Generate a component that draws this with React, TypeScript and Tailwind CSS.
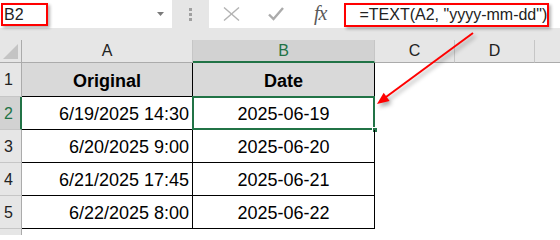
import React from 'react';

const rows = [
    { n: 2, a: '6/19/2025 14:30', b: '2025-06-19' },
    { n: 3, a: '6/20/2025 9:00', b: '2025-06-20' },
    { n: 4, a: '6/21/2025 17:45', b: '2025-06-21' },
    { n: 5, a: '6/22/2025 8:00', b: '2025-06-22' },
];

const Arrow = () => (
    <svg
        className="absolute inset-0 pointer-events-none drop-shadow-[2px_3px_2px_rgba(0,0,0,0.35)]"
        width="560"
        height="235"
        viewBox="0 0 560 235"
    >
        <line x1="473" y1="33" x2="386" y2="97" stroke="#ff0000" strokeWidth="2" />
        <polygon points="377,104 389.6,100.9 383.7,92.8" fill="#ff0000" />
    </svg>
);

export default function App() {
    return (
        <div className="relative w-[560px] h-[235px] overflow-hidden bg-white font-['Liberation_Sans',Arial,sans-serif] text-black">
            {/* Name box + formula bar */}
            <div className="flex h-[28px]">
                <div className="w-[172px] bg-white flex items-start pt-[3px] pl-[1px] relative">
                    <div className="w-[47px] h-[23px] border-2 border-[#ff0000] shadow-[2px_2px_3px_rgba(0,0,0,0.3)] flex items-center pl-[1px] text-[16px] text-[#222]">
                        B2
                    </div>
                    <svg className="absolute left-[157px] top-[12px]" width="7" height="4" viewBox="0 0 7 4">
                        <polygon points="0,0 7,0 3.5,4" fill="#7a7a7a" />
                    </svg>
                </div>
                <div className="w-[37px] bg-[#e6e6e6] flex flex-col items-center pt-[8px] gap-[2px] pr-[1px]">
                    <div className="w-[3px] h-[3px] bg-[#a0a0a0]" />
                    <div className="w-[3px] h-[3px] bg-[#a0a0a0]" />
                    <div className="w-[3px] h-[3px] bg-[#a0a0a0]" />
                </div>
                <div className="flex-1 bg-white flex items-start">
                    <svg className="ml-[14px] mt-[7px]" width="17" height="14" viewBox="0 0 17 14">
                        <line x1="1" y1="0.5" x2="16" y2="13.5" stroke="#b3b3b3" strokeWidth="1.4" />
                        <line x1="16" y1="0.5" x2="1" y2="13.5" stroke="#b3b3b3" strokeWidth="1.4" />
                    </svg>
                    <svg className="ml-[28px] mt-[7px]" width="16" height="14" viewBox="0 0 16 14">
                        <polyline points="1,7.5 5.5,12 15,1" fill="none" stroke="#ababab" strokeWidth="2.4" />
                    </svg>
                    <span className="ml-[30px] mt-[0px] font-['Liberation_Serif',serif] italic text-[20px] leading-[26px] text-[#5a5a5a] tracking-[-1px]">
                        fx
                    </span>
                    <div className="ml-[18px] mt-[3px] w-[205px] h-[24px] border-2 border-[#ff0000] shadow-[2px_2px_3px_rgba(0,0,0,0.3)] flex items-center pl-[13px] text-[16px] text-[#222] whitespace-nowrap">
                        =TEXT(A2, "yyyy-mm-dd")
                    </div>
                </div>
            </div>

            <div className="h-[12px] bg-[#e6e6e6]" />

            {/* Sheet grid */}
            <div className="grid grid-cols-[22px_171px_182px_80px_80px_1fr] grid-rows-[23px_34px_33px_33px_33px_33px_1fr] h-[195px]">
                {/* Column headers */}
                <div className="bg-[#e6e6e6] border-r border-b border-[#ababab] flex items-end justify-end pr-[3px] pb-[3px]">
                    <svg width="15" height="15" viewBox="0 0 15 15">
                        <polygon points="15,0 15,15 0,15" fill="#c4c4c4" />
                    </svg>
                </div>
                <div className="bg-[#e6e6e6] border-r border-r-[#c6c6c6] border-b border-b-[#ababab] flex items-center justify-center text-[16px] text-[#222]">
                    A
                </div>
                <div className="bg-[#d2d2d2] border-r border-r-[#c6c6c6] border-b-2 border-b-[#217346] flex items-center justify-center text-[16px] text-[#217346] pt-[1px]">
                    B
                </div>
                <div className="bg-[#e6e6e6] border-r border-r-[#c6c6c6] border-b border-b-[#ababab] flex items-center justify-center text-[16px] text-[#222]">
                    C
                </div>
                <div className="bg-[#e6e6e6] border-r border-r-[#c6c6c6] border-b border-b-[#ababab] flex items-center justify-center text-[16px] text-[#222]">
                    D
                </div>
                <div className="bg-[#e6e6e6] border-b border-b-[#ababab]" />

                {/* Row 1 */}
                <div className="bg-[#e6e6e6] border-r border-r-[#ababab] border-b border-b-[#c6c6c6] flex items-end pl-[4px] pb-[4px] text-[16px] text-[#222]">
                    1
                </div>
                <div className="bg-[#d9d9d9] border-r border-b border-black flex items-center justify-center pt-[3px] text-[18px] font-bold">
                    Original
                </div>
                <div className="bg-[#d9d9d9] border-r border-black flex items-center justify-center pt-[3px] text-[18px] font-bold">
                    Date
                </div>
                <div />
                <div />
                <div />

                {/* Data rows */}
                {rows.map((r) => {
                    const selected = r.n === 2;
                    return (
                        <React.Fragment key={r.n}>
                            <div
                                className={
                                    selected
                                        ? 'bg-[#d2d2d2] border-r-2 border-r-[#217346] border-b border-b-[#c6c6c6] flex items-end pl-[4px] pb-[3px] text-[16px] text-[#217346]'
                                        : 'bg-[#e6e6e6] border-r border-r-[#ababab] border-b border-b-[#c6c6c6] flex items-end pl-[4px] pb-[3px] text-[16px] text-[#222]'
                                }
                            >
                                {r.n}
                            </div>
                            <div className="border-r border-b border-black flex items-center justify-end pr-[3px] pt-[2px] text-[18px]">
                                {r.a}
                            </div>
                            <div className="relative border-r border-b border-black flex items-center justify-center pt-[2px] text-[18px]">
                                {r.b}
                                {selected && (
                                    <>
                                        <div className="absolute -top-[1px] -left-[1px] -right-[1px] -bottom-[1px] border-2 border-[#217346]" />
                                        <div className="absolute -right-[4px] -bottom-[4px] w-[6px] h-[6px] bg-[#217346] border border-white" />
                                    </>
                                )}
                            </div>
                            <div />
                            <div />
                            <div />
                        </React.Fragment>
                    );
                })}

                {/* Row 6 */}
                <div className="bg-[#e6e6e6] border-r border-r-[#ababab]" />
                <div />
                <div />
                <div />
                <div />
                <div />
            </div>

            <Arrow />
        </div>
    );
}
